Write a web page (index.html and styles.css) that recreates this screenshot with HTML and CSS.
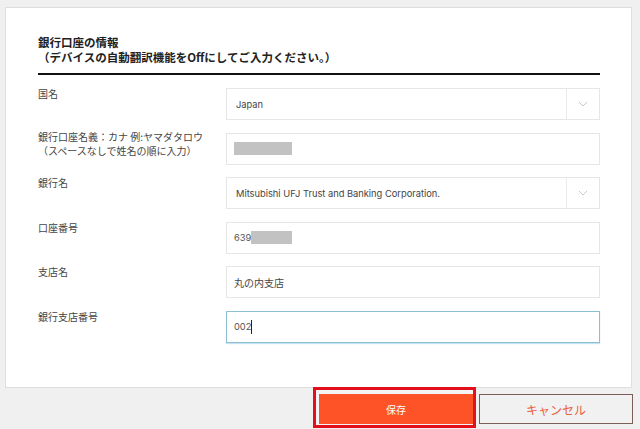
FILE: index.html
```html
<!DOCTYPE html>
<html lang="ja">
<head>
<meta charset="utf-8">
<link rel="stylesheet" href="styles.css">
</head>
<body>
<div class="card">
  <h2 class="title"><span class="tline">銀行口座の情報</span><span class="tline">（デバイスの自動翻訳機能をOffにしてご入力ください。）</span></h2>
  <div class="form">
    <div class="row">
      <div class="label">国名</div>
      <div class="field select"><span class="val latin">Japan</span><span class="arrow"><svg width="10" height="6" viewBox="0 0 10 6"><path d="M1 1 L5 5 L9 1" fill="none" stroke="#c8c8c8" stroke-width="1"/></svg></span></div>
    </div>
    <div class="row">
      <div class="label two">銀行口座名義：カナ 例:ヤマダタロウ<br>（スペースなしで姓名の順に入力）</div>
      <div class="field"><span class="redact r1"></span></div>
    </div>
    <div class="row">
      <div class="label">銀行名</div>
      <div class="field select"><span class="val latin">Mitsubishi UFJ Trust and Banking Corporation.</span><span class="arrow"><svg width="10" height="6" viewBox="0 0 10 6"><path d="M1 1 L5 5 L9 1" fill="none" stroke="#c8c8c8" stroke-width="1"/></svg></span></div>
    </div>
    <div class="row">
      <div class="label">口座番号</div>
      <div class="field"><span class="val latin gray">639</span><span class="redact r2"></span></div>
    </div>
    <div class="row">
      <div class="label">支店名</div>
      <div class="field"><span class="val jp">丸の内支店</span></div>
    </div>
    <div class="row">
      <div class="label">銀行支店番号</div>
      <div class="field focus"><span class="val latin gray">002</span><span class="caret"></span></div>
    </div>
  </div>
</div>
<div class="actions">
  <div class="highlight"><button class="btn save">保存</button></div>
  <button class="btn cancel">キャンセル</button>
</div>
</body>
</html>
```
FILE: styles.css
```css
html, body {
  margin: 0;
  padding: 0;
  background: #f0f0f0;
  font-family: "Noto Sans CJK JP", "Noto Sans", sans-serif;
  color: #333;
}
.card {
  box-sizing: border-box;
  margin: 7px 0 0 5px;
  width: 627px;
  height: 381px;
  background: #fff;
  border: 1px solid #dedede;
  padding: 27px 31px 0 32px;
}
.title {
  margin: 0;
  font-size: 11.5px;
  line-height: 15px;
  font-weight: bold;
  color: #222;
  padding-bottom: 8px;
  border-bottom: 2px solid #111;
  display: flex;
  flex-direction: column;
}
.tline {
  display: block;
  white-space: nowrap;
}
.form {
  display: flex;
  flex-direction: column;
  gap: 12.6px;
  margin-top: 13px;
}
.row {
  display: flex;
  align-items: flex-start;
}
.label {
  width: 188px;
  font-size: 10px;
  line-height: 14px;
  color: #444;
  margin-top: -1px;
}
.label.two { margin-top: -3px; }
.field {
  box-sizing: border-box;
  width: 374px;
  height: 32px;
  border: 1px solid #e6e6e6;
  display: flex;
  align-items: center;
  padding-left: 7px;
}
.val {
  font-size: 10px;
  color: #444;
}
.latin { font-family: Inter, "Noto Sans", sans-serif; font-size: 9.3px; }
.gray { color: #555; }
.jp { font-size: 10px; }
.select { padding-right: 0; }
.select .val { flex: 1; padding-left: 2px; }
.arrow {
  width: 32px;
  height: 100%;
  border-left: 1px solid #ebebeb;
  display: flex;
  align-items: center;
  justify-content: center;
}
.redact {
  display: inline-block;
  background: #c2c2c2;
  height: 13px;
}
.r1 { width: 58px; }
.r2 { width: 41px; }
.focus {
  border-color: #8fbfd2;
  box-shadow: 0 1px 1px #c4e2f2;
}
.caret {
  display: inline-block;
  width: 1px;
  height: 14px;
  background: #222;
}
.actions {
  display: flex;
  justify-content: flex-end;
  align-items: flex-start;
  margin: -1px 7px 0 0;
  gap: 3px;
}
.highlight {
  border: 3px solid #e3101c;
  padding: 4px 0 1px 3px;
  background: #f4f4f4;
}
.btn {
  display: block;
  box-sizing: border-box;
  width: 154px;
  height: 30px;
  font-family: "Noto Sans CJK JP", sans-serif;
  cursor: pointer;
}
.save {
  background: #fe5227;
  border: none;
  color: #fff;
  font-size: 10px;
}
.cancel {
  margin-top: 7px;
  background: #f1f1f1;
  border: 1px solid #7c5f58;
  color: #e8603e;
  font-size: 12px;
}
```
